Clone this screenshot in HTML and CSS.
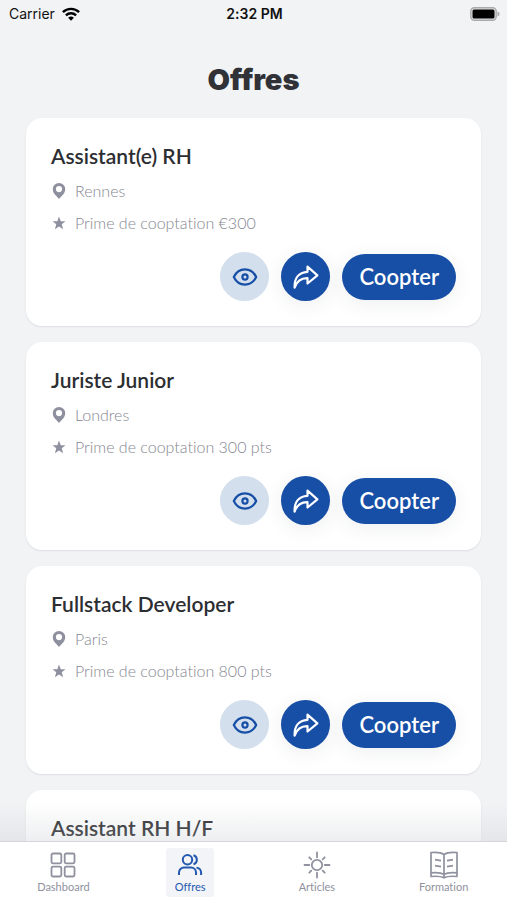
FILE: index.html
```html
<!DOCTYPE html>
<html lang="fr">
<head>
<meta charset="utf-8">
<meta name="viewport" content="width=device-width, initial-scale=1">
<title>Offres</title>
<link rel="stylesheet" href="styles.css">
</head>
<body>
<svg class="sprite" aria-hidden="true">
  <symbol id="pin" viewBox="0 0 16 18"><path fill="currentColor" fill-rule="evenodd" d="M8 1a6.200 6.200 0 0 0-6.200 6.200c0 2.800 1.600 4.800 3.300 6.600L8 17l2.900-3.200c1.700-1.800 3.300-3.800 3.300-6.600A6.200 6.200 0 0 0 8 1zm0 3a3.100 3.100 0 1 1 0 6.200A3.100 3.100 0 0 1 8 4z"/></symbol>
  <symbol id="star" viewBox="0 0 16 16"><path fill="currentColor" d="M8 1.500l1.700 4.700 4.800.1-3.800 3 1.400 4.900L8 11.500l-4.100 2.700 1.400-4.900-3.800-3 4.800-.1z"/></symbol>
  <symbol id="eye" viewBox="0 0 26 20"><g fill="none" stroke="currentColor" stroke-width="2.200"><path stroke-linejoin="round" d="M1.800 10C4.200 5 8.200 2.400 13 2.400S21.800 5 24.200 10C21.800 15 17.800 17.600 13 17.600S4.200 15 1.800 10z"/><circle cx="13" cy="10" r="2.600"/></g></symbol>
  <symbol id="share" viewBox="0 0 26 26"><path fill="none" stroke="currentColor" stroke-width="2.200" stroke-linejoin="round" d="M14.500 7.800V2.600l9.900 8.700-9.900 8.200v-5.300C7.600 14 3.600 18 1.600 23.600 1.200 14.500 5.500 8.300 14.500 7.800z"/></symbol>
</svg>

<header class="status">
  <span class="carrier">Carrier
    <svg class="wifi" viewBox="0 0 18 14" aria-hidden="true"><g fill="none" stroke="#000" stroke-width="2.400"><path d="M.9 5.200a11.500 11.500 0 0 1 16.200 0"/><path d="M3.900 8.300a7.300 7.300 0 0 1 10.200 0"/></g><path d="M9 13.800l-2.900-3a4.200 4.200 0 0 1 5.800 0z"/></svg>
  </span>
  <time class="clock">2:32 PM</time>
  <svg class="battery" viewBox="0 0 30 14" aria-hidden="true"><rect x=".8" y=".8" width="25.400" height="12.400" rx="3.500" fill="#e4e4e5" stroke="#aaa" stroke-width="1.400"/><rect x="2.500" y="2.500" width="22" height="9" rx="1.500"/><path fill="#aaa" d="M27.500 4.500c2.800 1 2.800 4 0 5z"/></svg>
</header>

<main class="screen">
  <h1 class="heading">Offres</h1>
  <section class="offers">
    <article class="card">
      <h2 class="title">Assistant(e) RH</h2>
      <p class="meta"><svg class="meta-icon" aria-hidden="true"><use href="#pin"/></svg>Rennes</p>
      <p class="meta"><svg class="meta-icon" aria-hidden="true"><use href="#star"/></svg>Prime de cooptation €300</p>
      <div class="actions">
        <button class="round view" type="button" aria-label="Voir"><svg class="eye" aria-hidden="true"><use href="#eye"/></svg></button>
        <button class="round share" type="button" aria-label="Partager"><svg class="arrow" aria-hidden="true"><use href="#share"/></svg></button>
        <button class="coopt" type="button">Coopter</button>
      </div>
    </article>
    <article class="card">
      <h2 class="title">Juriste Junior</h2>
      <p class="meta"><svg class="meta-icon" aria-hidden="true"><use href="#pin"/></svg>Londres</p>
      <p class="meta"><svg class="meta-icon" aria-hidden="true"><use href="#star"/></svg>Prime de cooptation 300 pts</p>
      <div class="actions">
        <button class="round view" type="button" aria-label="Voir"><svg class="eye" aria-hidden="true"><use href="#eye"/></svg></button>
        <button class="round share" type="button" aria-label="Partager"><svg class="arrow" aria-hidden="true"><use href="#share"/></svg></button>
        <button class="coopt" type="button">Coopter</button>
      </div>
    </article>
    <article class="card">
      <h2 class="title">Fullstack Developer</h2>
      <p class="meta"><svg class="meta-icon" aria-hidden="true"><use href="#pin"/></svg>Paris</p>
      <p class="meta"><svg class="meta-icon" aria-hidden="true"><use href="#star"/></svg>Prime de cooptation 800 pts</p>
      <div class="actions">
        <button class="round view" type="button" aria-label="Voir"><svg class="eye" aria-hidden="true"><use href="#eye"/></svg></button>
        <button class="round share" type="button" aria-label="Partager"><svg class="arrow" aria-hidden="true"><use href="#share"/></svg></button>
        <button class="coopt" type="button">Coopter</button>
      </div>
    </article>
    <article class="card">
      <h2 class="title">Assistant RH H/F</h2>
    </article>
  </section>
</main>

<nav class="tabs">
  <a class="tab" href="#dashboard">
    <svg class="tab-icon" viewBox="0 0 28 28" aria-hidden="true"><g fill="none" stroke="currentColor" stroke-width="1.800"><rect x="2.500" y="2.500" width="9.800" height="9.800" rx="1.500"/><rect x="15.700" y="2.500" width="9.800" height="9.800" rx="1.500"/><rect x="2.500" y="15.700" width="9.800" height="9.800" rx="1.500"/><rect x="15.700" y="15.700" width="9.800" height="9.800" rx="1.500"/></g></svg>
    Dashboard
  </a>
  <a class="tab active" href="#offres" aria-current="page">
    <svg class="tab-icon" viewBox="0 0 28 28" aria-hidden="true"><g fill="none" stroke="currentColor" stroke-width="2"><circle cx="11.500" cy="8.800" r="4.700"/><path d="M3 24v-2.500a5 5 0 0 1 5-5h7a5 5 0 0 1 5 5V24M17.500 4.300a4.700 4.700 0 0 1 0 9M20.500 16.700a5 5 0 0 1 4.600 5V24"/></g></svg>
    Offres
  </a>
  <a class="tab" href="#articles">
    <svg class="tab-icon" viewBox="0 0 28 28" aria-hidden="true"><g fill="none" stroke="currentColor" stroke-width="1.800" stroke-linecap="round"><circle cx="14" cy="14" r="5.200"/><path d="M14 1.500v4.800M14 21.700v4.800M1.500 14h4.800M21.700 14h4.800M6.300 6.300l2 2M19.700 19.700l2 2M6.300 21.700l2-2M19.700 8.300l2-2"/></g></svg>
    Articles
  </a>
  <a class="tab" href="#formation">
    <svg class="tab-icon" viewBox="0 0 28 28" aria-hidden="true"><g fill="none" stroke="currentColor" stroke-width="1.700" stroke-linejoin="round"><path d="M14 3.500C10.500 1 6 1 1 1.500v24c5-.5 9.500-.5 13 1.300 3.500-1.800 8-1.800 13-1.300v-24c-5-.5-9.500-.5-13 2zM14 3.500v23.300M1 21.800c5-.5 9.500-.5 13 1.500 3.500-2 8-2 13-1.500"/><path d="M5 8.700l6 1M5 14.700l6 1M23 8.700l-6 1M23 14.700l-6 1"/></g></svg>
    Formation
  </a>
</nav>
</body>
</html>
```
FILE: styles.css
```css
* {
  box-sizing: border-box;
}

body {
  display: flex;
  flex-direction: column;
  height: 100vh;
  margin: 0;
  overflow: hidden;
  background: #f2f3f5;
  color: #2d2e32;
  font-family: Lato, sans-serif;
  font-variant-ligatures: none;
}

h1, h2, p {
  margin: 0;
}

.sprite {
  position: absolute;
  width: 0;
  height: 0;
}

.status {
  display: grid;
  grid-template-columns: 1fr auto 1fr;
  align-items: center;
  height: 28px;
  padding: 0 7px 0 9px;
  color: #111;
  font-family: Inter, sans-serif;
  font-size: 14px;
  line-height: 20px;
}

.carrier {
  display: flex;
  align-items: center;
  gap: 7px;
}

.wifi {
  width: 18px;
  height: 14px;
}

.clock {
  font-weight: 600;
}

.battery {
  width: 30px;
  height: 14px;
  justify-self: end;
}

.screen {
  flex: 1;
  min-height: 0;
  overflow: hidden;
}

.heading {
  padding: 32px 0 18px;
  font-family: Inter, sans-serif;
  font-size: 29px;
  font-weight: 900;
  line-height: 40px;
  color: #303238;
  text-align: center;
}

.offers {
  display: flex;
  flex-direction: column;
  gap: 16px;
  padding: 0 26px 26px;
}

.card {
  padding: 25px;
  border-radius: 16px;
  background: #fff;
  box-shadow: 0 1px 2px rgba(40, 50, 70, 0.1);
}

.title {
  margin-bottom: 11px;
  font-size: 21px;
  font-weight: 600;
  line-height: 26px;
}

.meta {
  display: flex;
  align-items: center;
  gap: 8px;
  margin-bottom: 10px;
  color: #858791;
  font-size: 16px;
  font-weight: 300;
  line-height: 22px;
}

.meta-icon {
  width: 16px;
  height: 18px;
  color: #8e90a0;
}

.actions {
  display: flex;
  align-items: center;
  justify-content: flex-end;
  gap: 12px;
  margin-top: 18px;
}

.round {
  display: grid;
  place-items: center;
  width: 49px;
  height: 49px;
  padding: 0;
  border: 0;
  border-radius: 50%;
}

.view {
  background: #d3dfed;
  color: #174ea6;
}

.share,
.coopt {
  background: #174ea6;
  color: #fff;
  box-shadow: 0 4px 20px rgba(40, 50, 70, 0.08);
}

.eye {
  width: 26px;
  height: 20px;
}

.arrow {
  width: 26px;
  height: 26px;
}

.coopt {
  height: 46px;
  padding: 0 17px;
  border: 0;
  border-radius: 23px;
  font-family: inherit;
  font-size: 22px;
  font-weight: 600;
  line-height: 26px;
}

.tabs {
  display: grid;
  grid-template-columns: repeat(4, 1fr);
  justify-items: center;
  position: relative;
  padding: 6px 0 3px;
  border-top: 1px solid #dcdde0;
  background: #fff;
}

.tabs::before {
  content: "";
  position: absolute;
  inset: -40px 0 100%;
  background: linear-gradient(rgba(190, 195, 200, 0), rgba(190, 195, 200, 0.28));
}

.tab {
  display: flex;
  flex-direction: column;
  align-items: center;
  gap: 1px;
  min-width: 48px;
  padding: 3px 4px;
  border-radius: 3px;
  color: #8f919e;
  font-size: 11px;
  line-height: 14px;
  text-decoration: none;
}

.tab-icon {
  width: 28px;
  height: 28px;
}

.active {
  background: #f2f4f7;
  color: #2458b0;
}
```
